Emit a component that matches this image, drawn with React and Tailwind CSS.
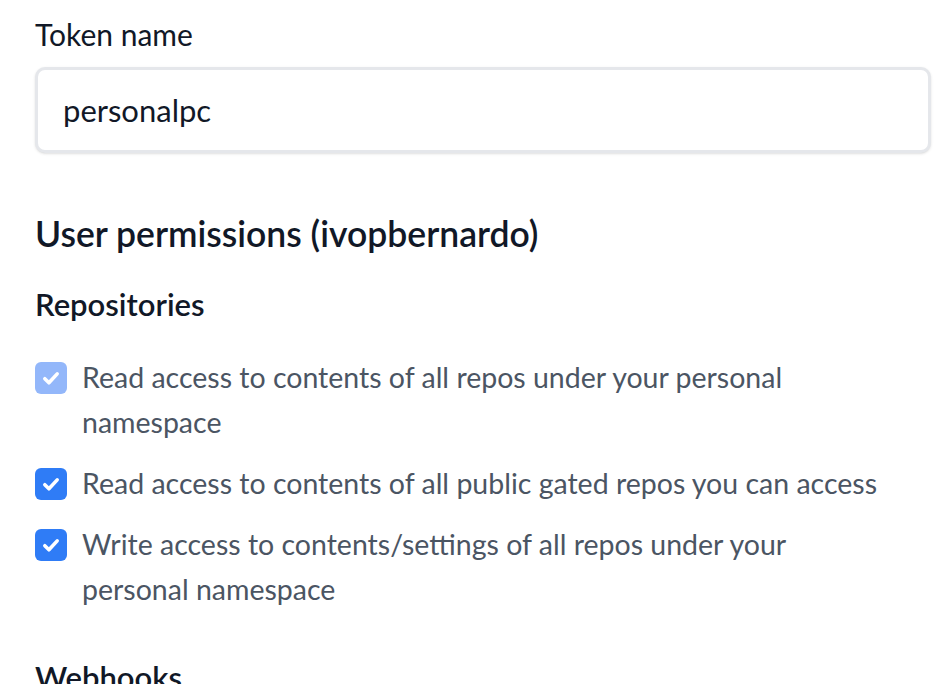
import React from 'react';

const Check = ({ disabled }) => (
  <span
    className={`mt-[7px] flex h-[32px] w-[32px] shrink-0 items-center justify-center rounded-[6px] ${
      disabled ? 'bg-[#93b7fa]' : 'bg-[#2f7cf6]'
    }`}
  >
    <svg viewBox="0 0 16 16" className="h-[22px] w-[22px]" fill="none">
      <path d="M3.5 8.5l3 3 6-6.5" stroke="white" strokeWidth="2.6" strokeLinecap="round" strokeLinejoin="round" />
    </svg>
  </span>
);

const perms = [
  { text: 'Read access to contents of all repos under your personal namespace', disabled: true },
  { text: 'Read access to contents of all public gated repos you can access' },
  { text: 'Write access to contents/settings of all repos under your personal namespace' },
];

export default function App() {
  return (
    <div className="h-[684px] overflow-hidden bg-white pl-[35px] pr-[19px] pt-[14px] text-[#111827]" style={{ fontFamily: 'Lato, "Noto Sans", sans-serif' }}>
      <label className="block text-[30px] leading-[40px]">Token name</label>
      <div className="mt-[13px] flex h-[86px] items-center rounded-[10px] border-[3px] border-[#e5e7eb] bg-white pl-[25px] shadow-sm">
        <span className="text-[31px]">personalpc</span>
      </div>

      <h2 className="mt-[58px] text-[35.5px] font-semibold leading-[46px]">User permissions (ivopbernardo)</h2>
      <h3 className="mt-[27px] text-[31px] font-semibold leading-[40px]">Repositories</h3>

      <div className="mt-[31px] flex flex-col gap-[16px]">
        {perms.map((p, i) => (
          <div key={i} className="flex gap-[15px]">
            <Check disabled={p.disabled} />
            <p className="max-w-[810px] text-[28.5px] leading-[45px] text-[#4b5563]">{p.text}</p>
          </div>
        ))}
      </div>

      <h3 className="mt-[45px] text-[31px] font-semibold leading-[40px]">Webhooks</h3>
    </div>
  );
}
